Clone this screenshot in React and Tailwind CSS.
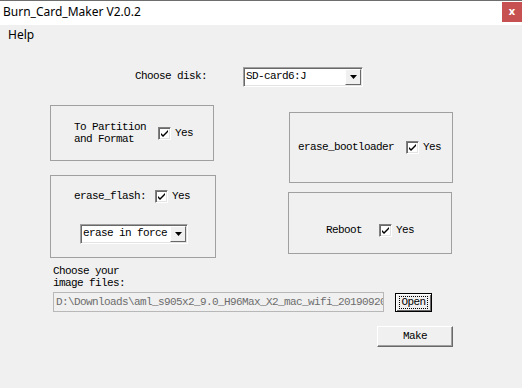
import { useState } from "react";

const mono = { fontFamily: '"Liberation Mono", "DejaVu Sans Mono", monospace' };

function Check({ checked, onToggle }) {
  return (
    <button
      onClick={onToggle}
      className="w-[13px] h-[13px] shrink-0 bg-white border border-t-[#808080] border-l-[#808080] border-r-white border-b-white shadow-[inset_1px_1px_0_#696969,inset_-1px_-1px_0_#e3e3e3] flex items-center justify-center"
    >
      {checked && (
        <svg width="9" height="9" viewBox="0 0 9 9">
          <path d="M1 4 L3 6 L8 1 L8 3 L3 8 L1 6 Z" fill="#000" />
        </svg>
      )}
    </button>
  );
}

function Combo({ value, width }) {
  return (
    <div
      className={`${width} h-[20px] bg-white flex items-center border border-t-[#a0a0a0] border-l-[#a0a0a0] border-r-white border-b-white shadow-[inset_1px_1px_0_#696969,inset_-1px_-1px_0_#e3e3e3]`}
    >
      <span className="flex-1 pl-[2px] text-[11px] tracking-[-0.6px] text-black whitespace-nowrap overflow-hidden" style={mono}>
        {value}
      </span>
      <span className="w-[16px] h-[16px] mr-[1px] bg-[#f0f0f0] border border-t-white border-l-white border-r-[#696969] border-b-[#696969] flex items-center justify-center">
        <svg width="7" height="4" viewBox="0 0 7 4">
          <path d="M0 0 H7 L3.5 4 Z" fill="#000" />
        </svg>
      </span>
    </div>
  );
}

function Yes({ checked, onToggle }) {
  return (
    <div className="flex items-center">
      <Check checked={checked} onToggle={onToggle} />
      <span className="ml-[4px] text-[11px] tracking-[-0.6px]" style={mono}>Yes</span>
    </div>
  );
}

export default function App() {
  const [opts, setOpts] = useState({ part: true, boot: true, flash: true, reboot: true });
  const flip = (k) => () => setOpts((o) => ({ ...o, [k]: !o[k] }));

  return (
    <div className="w-[522px] h-[388px] bg-[#f0f0f0] text-black overflow-hidden">
      {/* title bar */}
      <div className="h-[25px] bg-white border-t border-[#6e6e6e] flex items-start justify-between" style={{ fontFamily: '"Noto Sans", sans-serif' }}>
        <span className="ml-[3px] mt-[3px] text-[12px] leading-[16px]">Burn_Card_Maker V2.0.2</span>
        <div className="w-[20px] h-[20px] mt-[1px] bg-[#c75050] text-white text-[11px] font-bold leading-[18px] text-center">x</div>
      </div>
      {/* menu */}
      <div className="h-[25px] pt-[2px] pl-[8px] text-[12px] leading-[16px]" style={{ fontFamily: '"Noto Sans", sans-serif' }}>
        Help
      </div>

      <div style={mono} className="text-[11px] tracking-[-0.6px]">
        <div className="mt-[17px] h-[19px] flex items-center">
          <span className="ml-[135px] w-[108px]">Choose disk:</span>
          <Combo value="SD-card6:J" width="w-[120px]" />
        </div>

        <div className="flex items-start">
          <div className="ml-[50px] mt-[19px] flex flex-col">
            <div className="w-[164px] h-[56px] border border-[#a0a0a0] flex items-center pl-[23px]">
              <div className="w-[84px] leading-[12px]">
                <div>To Partition</div>
                <div>and Format</div>
              </div>
              <Yes checked={opts.part} onToggle={flip("part")} />
            </div>
            <div className="mt-[14px] w-[166px] h-[83px] border border-[#a0a0a0] flex flex-col">
              <div className="mt-[12px] ml-[23px] flex items-center">
                <span className="w-[81px]">erase_flash:</span>
                <Yes checked={opts.flash} onToggle={flip("flash")} />
              </div>
              <div className="mt-[19px] ml-[29px]">
                <Combo value="erase in force" width="w-[108px]" />
              </div>
            </div>
          </div>

          <div className="ml-[73px] mt-[26px] flex flex-col">
            <div className="w-[164px] h-[71px] border border-[#a0a0a0] flex items-center pl-[8px]">
              <span className="w-[108px]">erase_bootloader</span>
              <Yes checked={opts.boot} onToggle={flip("boot")} />
            </div>
            <div className="mt-[9px] -ml-px w-[164px] h-[62px] border border-[#a0a0a0] pt-[29px] pl-[37px]">
              <div className="flex items-center">
                <span className="w-[53px]">Reboot</span>
                <Yes checked={opts.reboot} onToggle={flip("reboot")} />
              </div>
            </div>
          </div>
        </div>

        <div className="mt-[7px] ml-[53px] leading-[12px]">
          <div>Choose your</div>
          <div>image files:</div>
        </div>

        <div className="mt-[3px] ml-[53px] flex items-start">
          <div className="w-[331px] h-[20px] bg-[#f0f0f0] border border-[#b8b8b8] flex items-center pl-[2px] text-[#6d6d6d] whitespace-nowrap overflow-hidden">
            D:\Downloads\aml_s905x2_9.0_H96Max_X2_mac_wifi_20190920
          </div>
          <button className="ml-[11px] mt-[1px] w-[37px] h-[19px] bg-[#f0f0f0] border border-black shadow-[inset_1px_1px_0_#fff,inset_-1px_-1px_0_#696969] flex items-center justify-center">
            <span className="border border-dotted border-black px-[1px] leading-[11px]">Open</span>
          </button>
        </div>

        <div className="mt-[14px] ml-[377px]">
          <button className="w-[76px] h-[21px] bg-[#f0f0f0] border border-t-white border-l-white border-r-[#696969] border-b-[#696969] shadow-[inset_-1px_-1px_0_#a0a0a0] flex items-center justify-center">
            Make
          </button>
        </div>
      </div>
    </div>
  );
}
